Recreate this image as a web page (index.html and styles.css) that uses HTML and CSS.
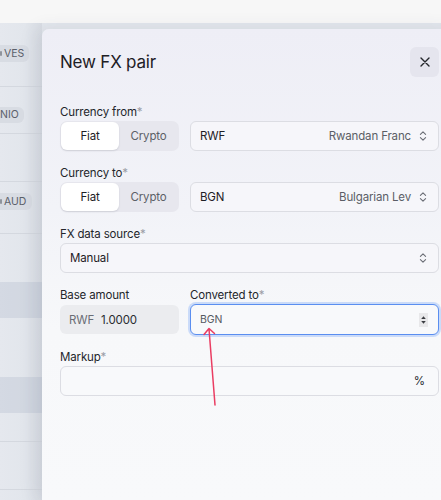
FILE: index.html
```html
<!DOCTYPE html>
<html lang="en">
<head>
<meta charset="utf-8">
<title>New FX pair</title>
<link rel="stylesheet" href="styles.css">
</head>
<body>
  <div class="topbar"></div>
  <div class="stage">
    <div class="list">
      <div class="row row-a"><span class="chip"><i class="chip-mark"></i>VES</span></div>
      <div class="row row-b"><span class="chip">NIO</span></div>
      <div class="row row-c"></div>
      <div class="row row-d"><span class="chip"><i class="chip-mark"></i>AUD</span></div>
      <div class="row row-e"></div>
      <div class="row row-f shade"></div>
      <div class="row row-g"></div>
      <div class="row row-h shade"></div>
      <div class="row row-i"></div>
      <div class="row row-j"></div>
    </div>

    <section class="panel">
      <header class="panel-head">
        <h1 class="title">New FX pair</h1>
        <button class="close" type="button" aria-label="Close">
          <svg width="10" height="10" viewBox="0 0 10 10"><path d="M1 1L9 9M9 1L1 9" stroke="#25272c" stroke-width="1.4" stroke-linecap="round"/></svg>
        </button>
      </header>

      <div class="form">
        <div class="field">
          <label class="label">Currency from<span class="req">*</span></label>
          <div class="pair">
            <div class="seg">
              <span class="seg-btn active">Fiat</span>
              <span class="seg-btn">Crypto</span>
            </div>
            <div class="select">
              <span class="code">RWF</span>
              <span class="name">Rwandan Franc</span>
              <svg class="updown" width="8" height="12" viewBox="0 0 8 12"><path d="M1.4 4.4L4 1.8L6.6 4.4M1.4 7.6L4 10.2L6.6 7.6" fill="none" stroke="#6b6e76" stroke-width="1.1" stroke-linecap="round" stroke-linejoin="round"/></svg>
            </div>
          </div>
        </div>

        <div class="field">
          <label class="label">Currency to<span class="req">*</span></label>
          <div class="pair">
            <div class="seg">
              <span class="seg-btn active">Fiat</span>
              <span class="seg-btn">Crypto</span>
            </div>
            <div class="select">
              <span class="code">BGN</span>
              <span class="name">Bulgarian Lev</span>
              <svg class="updown" width="8" height="12" viewBox="0 0 8 12"><path d="M1.4 4.4L4 1.8L6.6 4.4M1.4 7.6L4 10.2L6.6 7.6" fill="none" stroke="#6b6e76" stroke-width="1.1" stroke-linecap="round" stroke-linejoin="round"/></svg>
            </div>
          </div>
        </div>

        <div class="field">
          <label class="label">FX data source<span class="req">*</span></label>
          <div class="select">
            <span class="code">Manual</span>
            <span class="name"></span>
            <svg class="updown" width="8" height="12" viewBox="0 0 8 12"><path d="M1.4 4.4L4 1.8L6.6 4.4M1.4 7.6L4 10.2L6.6 7.6" fill="none" stroke="#6b6e76" stroke-width="1.1" stroke-linecap="round" stroke-linejoin="round"/></svg>
          </div>
        </div>

        <div class="pair">
          <div class="field">
            <label class="label">Base amount</label>
            <div class="readonly">
              <span class="unit">RWF</span>
              <span class="amount">1.0000</span>
            </div>
          </div>
          <div class="field">
            <label class="label">Converted to<span class="req">*</span></label>
            <div class="input focus">
              <span class="unit-sm">BGN</span>
              <span class="spin">
                <svg width="7" height="10" viewBox="0 0 7 10"><path d="M3.5 1.2L5.8 4H1.2Z M3.5 8.8L5.8 6H1.2Z" fill="#3a3c41"/></svg>
              </span>
            </div>
          </div>
        </div>

        <div class="field">
          <label class="label">Markup<span class="req">*</span></label>
          <div class="input">
            <span class="grow"></span>
            <span class="pct">%</span>
          </div>
        </div>
      </div>

      <svg class="pointer" width="20" height="84" viewBox="0 0 20 84">
        <path d="M13 82L7 6M2 11.5L7 5.5L12.5 10.5" fill="none" stroke="#ea3d62" stroke-width="1.5" stroke-linecap="round" stroke-linejoin="round"/>
      </svg>
    </section>
  </div>
</body>
</html>
```

FILE: styles.css
```css
* { box-sizing: border-box; }

html, body {
  margin: 0;
  height: 100%;
  overflow: hidden;
}

body {
  background: #f7f7f7;
  font-family: Inter, "Noto Sans", sans-serif;
  color: #1d1f24;
}

.topbar {
  height: 23px;
  background: #f7f7f7;
}

.stage {
  display: flex;
  height: calc(100% - 23px);
  background: #e3e7ed;
}

/* table rows peeking out behind the drawer */
.list {
  width: 42px;
  flex: none;
  overflow: hidden;
  background: linear-gradient(to right, #e5e8ee 0%, #e2e6ec 60%, #d9dde4 100%);
}

.row {
  border-bottom: 1px solid #d4d8df;
}
.row-a { height: 64px; padding-top: 17px; }
.row-b { height: 47px; padding-top: 15px; }
.row-c { height: 48px; }
.row-d { height: 52px; padding-top: 6px; }
.row-e { height: 48px; border-bottom: none; }
.row-f { height: 36px; border-bottom: none; }
.row-g { height: 59px; border-bottom: none; }
.row-h { height: 36px; border-bottom: none; }
.row-i { height: 29px; }
.row-j { height: 48px; }
.shade { background: rgba(180, 190, 205, 0.35); }

.chip {
  display: inline-flex;
  align-items: center;
  height: 17px;
  padding: 0 5px 0 0;
  border-radius: 0 6px 6px 0;
  background: #d8dce3;
  color: #5b606a;
  font-size: 10.5px;
  white-space: nowrap;
}
.chip-mark {
  width: 2px;
  height: 5px;
  margin-right: 2px;
  background: #8f949c;
  border-radius: 1px;
}
.row-b .chip { height: 16px; }
.row-d .chip { padding-right: 6px; }

/* drawer */
.panel {
  position: relative;
  flex: none;
  width: 415px;
  margin-top: 6px;
  padding: 18px 18px 0 18px;
  border-top-left-radius: 7px;
  background: linear-gradient(to bottom, #eeeef6 0px, #f2f3f8 180px, #f7f8fa 300px, #f8f9fb 100%);
  box-shadow: -6px 0 18px rgba(60, 70, 90, 0.10);
}

.panel-head {
  display: flex;
  align-items: center;
  justify-content: space-between;
  height: 30px;
}

.title {
  margin: 0;
  font-size: 17px;
  font-weight: 400;
  letter-spacing: -0.2px;
  color: #1e2025;
}

.close {
  width: 29px;
  height: 30px;
  border: none;
  border-radius: 6px;
  background: #e5e5ee;
  display: flex;
  align-items: center;
  justify-content: center;
  padding: 0;
}

.form {
  display: flex;
  flex-direction: column;
  gap: 13px;
  margin-top: 26px;
  font-size: 11.5px;
  letter-spacing: -0.15px;
}

.field {
  display: flex;
  flex-direction: column;
  min-width: 0;
}

.label {
  height: 18px;
  line-height: 18px;
  color: #24262b;
}
.req { color: #9c9ea6; }

.pair {
  display: grid;
  grid-template-columns: 119px 1fr;
  gap: 11px;
}

.seg {
  display: flex;
  height: 30px;
  padding: 1px;
  border-radius: 7px;
  background: #e7e7ee;
}
.seg-btn {
  flex: 1;
  display: flex;
  align-items: center;
  justify-content: center;
  color: #5c5f67;
  border-radius: 6px;
}
.seg-btn.active {
  flex: 0 0 58px;
  background: #ffffff;
  color: #1e2025;
  box-shadow: 0 1px 2px rgba(20, 25, 40, 0.12);
}

.select, .input {
  display: flex;
  align-items: center;
  height: 30px;
  padding: 0 11px 0 9px;
  border: 1px solid #dcdde3;
  border-radius: 6px;
  background: #f6f6fa;
}
.select .code { color: #1e2025; }
.select .name {
  flex: 1;
  text-align: right;
  color: #5b5e66;
  margin-right: 8px;
}
.updown { flex: none; }

.readonly {
  display: flex;
  align-items: center;
  height: 29px;
  margin-top: 1px;
  padding: 0 9px;
  border-radius: 6px;
  background: #ebecef;
}
.unit { color: #6a6d75; margin-right: 7px; }
.amount { color: #2a2c31; }

.input { background: #f8f9fb; }
.input.focus {
  height: 31px;
  border: 1.5px solid #5a8ef0;
  box-shadow: 0 0 0 2px rgba(120, 165, 245, 0.35);
  justify-content: space-between;
}
.unit-sm {
  font-size: 10.5px;
  color: #55585f;
}
.spin {
  width: 9px;
  height: 14px;
  margin-right: -1px;
  background: #e8e8ea;
  display: flex;
  align-items: center;
  justify-content: center;
}
.grow { flex: 1; }
.pct { color: #2a2c31; margin-right: 2px; }

/* annotation arrow drawn over the form */
.pointer {
  position: absolute;
  left: 160px;
  top: 294px;
}
```
